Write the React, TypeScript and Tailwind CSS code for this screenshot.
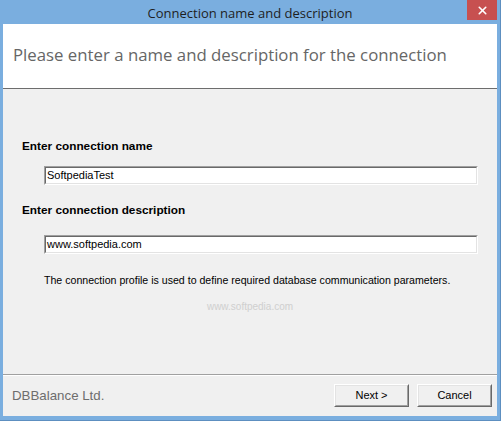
import { X } from 'lucide-react'

const sunken =
  'border border-t-[#a0a0a0] border-l-[#a0a0a0] border-b-white border-r-white'
const sunkenInner =
  'border border-t-[#696969] border-l-[#696969] border-b-[#e3e3e3] border-r-[#e3e3e3]'

function Field({ value }: { value: string }) {
  return (
    <div className={`ml-[41px] mr-[19px] h-[19px] ${sunken}`}>
      <div className={`h-full bg-white ${sunkenInner} px-[1px] text-[11px] leading-[15px] text-black`}>
        {value}
      </div>
    </div>
  )
}

function Button({ label }: { label: string }) {
  return (
    <button className="w-[75px] h-[23px] border border-t-white border-l-white border-b-[#696969] border-r-[#696969] bg-[#f0f0f0]">
      <div className="h-full border border-t-[#e3e3e3] border-l-[#e3e3e3] border-b-[#a0a0a0] border-r-[#a0a0a0] flex items-center justify-center text-[11px] text-black">
        {label}
      </div>
    </button>
  )
}

export default function App() {
  return (
    <div
      className="w-[501px] h-[421px] bg-[#7aaedf] border-r border-b border-[#5d8fc0] flex flex-col overflow-hidden"
      style={{ fontFamily: '"Liberation Sans", Arial, sans-serif' }}
    >
      <div className="h-[24px] shrink-0 flex items-start relative">
        <div className="flex-1 text-center text-[13px] leading-[22px] text-[#1e1e1e] pt-[2px]" style={{ fontFamily: '"Open Sans", "Noto Sans", sans-serif' }}>
          Connection name and description
        </div>
        <div className="absolute right-[3px] top-0 w-[30px] h-[20px] bg-[#c75050] flex items-center justify-center text-white">
          <X size={13} strokeWidth={3} />
        </div>
      </div>

      <div className="flex-1 mx-[3px] mb-[4px] bg-[#f0f0f0] flex flex-col">
        <div className="h-[65px] shrink-0 bg-white border-b border-[#6d6d6d] pl-[10px] pt-[19px]">
          <div className="text-[16.8px] leading-[24px] text-[#666666]" style={{ fontFamily: '"Open Sans", "Noto Sans", sans-serif' }}>
            Please enter a name and description for the connection
          </div>
        </div>

        <div className="flex-1 flex flex-col">
          <div className="pl-[19px] mt-[51px] text-[11.8px] leading-[13px] font-bold text-black">Enter connection name</div>
          <div className="mt-[13px]"><Field value="SoftpediaTest" /></div>
          <div className="pl-[19px] mt-[19px] text-[11.8px] leading-[13px] font-bold text-black">Enter connection description</div>
          <div className="mt-[18px]"><Field value="www.softpedia.com" /></div>
          <div className="pl-[41px] mt-[20px] text-[10.6px] leading-[13px] text-black">
            The connection profile is used to define required database communication parameters.
          </div>
          <div className="mt-[14px] text-center text-[10px] leading-[12px] text-[#cfcfcf]">www.softpedia.com</div>
        </div>

        <div className="h-[42px] shrink-0 border-t border-[#a0a0a0] flex items-center">
          <div className="w-full border-t border-white h-full flex items-center pl-[9px] pr-[5px] pb-[1px]">
            <div className="flex-1 text-[13.3px] text-[#6d6d6d]">DBBalance Ltd.</div>
            <div className="flex gap-[8px]">
              <Button label="Next >" />
              <Button label="Cancel" />
            </div>
          </div>
        </div>
      </div>
    </div>
  )
}
